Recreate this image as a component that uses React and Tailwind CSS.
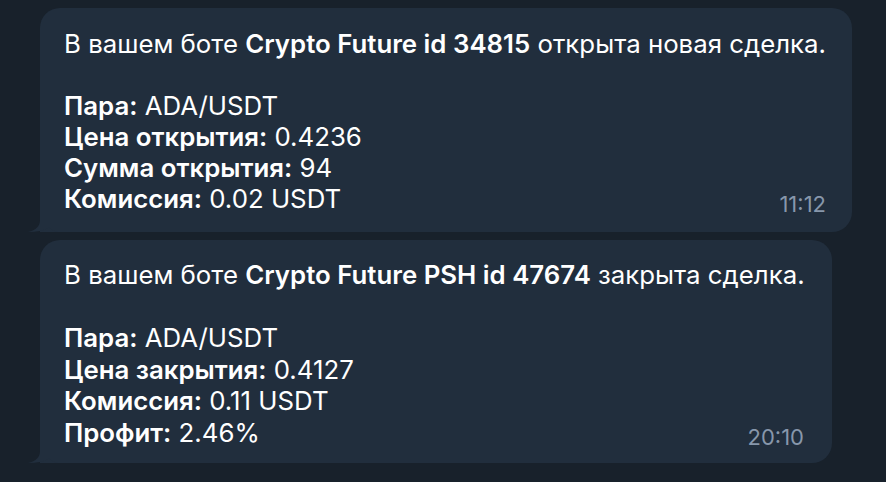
import React from "react";

function Tail() {
  return (
    <svg
      className="absolute left-[-12px] bottom-0"
      width="30"
      height="24"
      viewBox="0 0 30 24"
    >
      <path
        d="M12 0 L12 12 C12 18 8 22 0 24 C9 24 16 22.5 21 19.5 C24 22 27 23.5 30 24 L30 0 Z"
        fill="#212e3d"
      />
    </svg>
  );
}

function Bubble({ width, lines, time, pad, lh, timeCls }) {
  return (
    <div
      className={`relative ${width} bg-[#212e3d] rounded-[20px] rounded-bl-none`}
    >
      <div className={`grid pl-6 pr-6 ${pad}`}>
        <div className={`[grid-area:1/1] text-[25.8px] ${lh} text-white`}>
          {lines.map((l, i) => (
            <div key={i} className="whitespace-nowrap">
              {l || "\u00a0"}
            </div>
          ))}
        </div>
        <div
          className={`[grid-area:1/1] self-end justify-self-end text-[22px] leading-[22px] text-[#8797ab] ${timeCls}`}
        >
          {time}
        </div>
      </div>
      <Tail />
    </div>
  );
}

export default function App() {
  const font = { fontFamily: "Inter, 'Noto Sans', sans-serif" };
  return (
    <div
      className="w-[886px] h-[482px] bg-[#18212b] pl-10 pt-2 flex flex-col gap-2 overflow-hidden"
      style={font}
    >
      <Bubble
        width="w-[812px]"
        pad="pt-5 pb-[18px]"
        lh="leading-[31px]"
        timeCls="mr-[2px] mb-[-1px]"
        time="11:12"
        lines={[
          <>
            В вашем боте <b className="font-semibold">Crypto Future id 34815</b>{" "}
            открыта новая сделка.
          </>,
          "",
          <>
            <b className="font-semibold">Пара:</b> ADA/USDT
          </>,
          <>
            <b className="font-semibold">Цена открытия:</b> 0.4236
          </>,
          <>
            <b className="font-semibold">Сумма открытия:</b> 94
          </>,
          <>
            <b className="font-semibold">Комиссия:</b> 0.02 USDT
          </>,
        ]}
      />
      <Bubble
        width="w-[792px]"
        pad="pt-[19px] pb-[15px]"
        lh="leading-[31.5px]"
        timeCls="mr-1"
        time="20:10"
        lines={[
          <>
            В вашем боте{" "}
            <b className="font-semibold">Crypto Future PSH id 47674</b> закрыта
            сделка.
          </>,
          "",
          <>
            <b className="font-semibold">Пара:</b> ADA/USDT
          </>,
          <>
            <b className="font-semibold">Цена закрытия:</b> 0.4127
          </>,
          <>
            <b className="font-semibold">Комиссия:</b> 0.11 USDT
          </>,
          <>
            <b className="font-semibold">Профит:</b> 2.46%
          </>,
        ]}
      />
    </div>
  );
}
